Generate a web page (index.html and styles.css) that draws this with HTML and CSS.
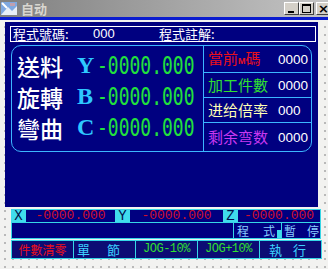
FILE: index.html
```html
<!DOCTYPE html>
<html lang="zh-Hant">
<head>
    <meta charset="UTF-8">
    <title>自动</title>
    <link rel="stylesheet" href="styles.css">
</head>
<body>
<div class="window">
    <div class="titlebar">
        <svg class="app-icon" width="16" height="15" viewBox="0 0 16 15">
            <rect x="0" y="1" width="16" height="13" fill="#7fa8e0"/>
            <path d="M0 14 L7 6 L11 10 L16 5 L16 14 Z" fill="#e8eef8"/>
            <path d="M1 2 L6 7" stroke="#ffffff" stroke-width="2"/>
            <rect x="9" y="2" width="5" height="3" fill="#c0a0b0"/>
        </svg>
        <span class="title">自动</span>
        <div class="caption-btns">
            <span class="cbtn"><span class="glyph-min"></span></span>
            <span class="cbtn"><span class="glyph-max"></span></span>
            <span class="cbtn close">×</span>
        </div>
    </div>
    <div class="menuline"></div>
    <div class="form">
        <div class="screen">
            <div class="info">
                <span class="info-label">程式號碼:</span>
                <span class="info-num">000</span>
                <span class="info-label">程式註解:</span>
            </div>
            <div class="panel">
                <div class="axes">
                    <div class="axis-row">
                        <span class="axis-name">送料</span>
                        <span class="axis-letter">Y</span>
                        <span class="axis-value">-0000.000</span>
                    </div>
                    <div class="axis-row">
                        <span class="axis-name">旋轉</span>
                        <span class="axis-letter">B</span>
                        <span class="axis-value">-0000.000</span>
                    </div>
                    <div class="axis-row">
                        <span class="axis-name">彎曲</span>
                        <span class="axis-letter">C</span>
                        <span class="axis-value">-0000.000</span>
                    </div>
                </div>
                <div class="stats">
                    <div class="stat">
                        <span class="stat-label red">當前<small>M</small>碼</span>
                        <span class="stat-value">0000</span>
                    </div>
                    <div class="stat">
                        <span class="stat-label green">加工件數</span>
                        <span class="stat-value">0000</span>
                    </div>
                    <div class="stat">
                        <span class="stat-label yellow">进给倍率</span>
                        <span class="stat-value">000</span>
                    </div>
                    <div class="stat">
                        <span class="stat-label purple">剩余弯数</span>
                        <span class="stat-value">0000</span>
                    </div>
                </div>
            </div>
        </div>
        <div class="controls">
            <div class="coords">
                <span class="coord-letter">X</span>
                <span class="coord-value cx">-0000.000</span>
                <span class="coord-letter">Y</span>
                <span class="coord-value cy">-0000.000</span>
                <span class="coord-letter">Z</span>
                <span class="coord-value cz">-0000.000</span>
            </div>
            <div class="status">
                <span class="status-blank"></span>
                <span class="status-cell prog">程 式</span>
                <span class="status-mark"></span>
                <span class="status-cell pause">暫 停</span>
            </div>
            <div class="buttons">
                <span class="btn red">件數清零</span>
                <span class="btn cyan spaced single">單 節</span>
                <span class="btn green jog">JOG-10%</span>
                <span class="btn green jog">JOG+10%</span>
                <span class="btn cyan spaced run">執 行</span>
            </div>
        </div>
    </div>
</div>
</body>
</html>
```

FILE: styles.css
```css
body {
    margin: 0;
    background: #d4d0c8;
}
.window {
    width: 328px;
    height: 269px;
    overflow: hidden;
    background: #d4d0c8;
    font-family: "Noto Sans CJK TC", "Noto Sans CJK SC", sans-serif;
}

/* title bar */
.titlebar {
    height: 17px;
    display: flex;
    align-items: center;
    background: linear-gradient(to right, #808080, #c4c4c4);
}
.app-icon {
    margin-left: 1px;
}
.title {
    margin-left: 4px;
    color: #d8d6d0;
    font-size: 13px;
    font-weight: bold;
    line-height: 17px;
}
.caption-btns {
    margin-left: auto;
    display: flex;
    margin-right: -3px;
}
.cbtn {
    width: 15px;
    height: 13px;
    box-sizing: border-box;
    background: #d4d0c8;
    border: 1px solid;
    border-color: #ffffff #404040 #404040 #ffffff;
    display: flex;
    align-items: center;
    justify-content: center;
    font-family: "DejaVu Sans", sans-serif;
    font-size: 13px;
    font-weight: bold;
    line-height: 11px;
    color: #000;
}
.cbtn.close {
    margin-left: 2px;
}
.glyph-min {
    width: 6px;
    height: 2px;
    background: #000;
    margin-top: 6px;
    margin-right: 2px;
}
.glyph-max {
    width: 7px;
    height: 6px;
    border: 1px solid #000;
    border-top-width: 2px;
}
.menuline {
    height: 3px;
    background: #0b1ccf;
}

/* form surface */
.form {
    height: 249px;
    padding-top: 2px;
    box-sizing: border-box;
    background-color: #f2f2f0;
    background-image: radial-gradient(#9a9a9a 0.6px, transparent 0.9px);
    background-size: 8px 8px;
    background-position: 1px 3px;
}
.screen {
    margin-left: 5px;
    width: 313px;
    height: 185px;
    padding: 4px 0 0 5px;
    box-sizing: border-box;
    background: #000080;
}
.info {
    width: 306px;
    height: 16px;
    box-sizing: border-box;
    border: 1px solid #ffffff;
    display: flex;
    align-items: center;
    color: #ffffff;
    font-size: 13px;
    line-height: 14px;
}
.info-label:first-child {
    width: 80px;
    padding-left: 2px;
}
.info-num {
    width: 66px;
    font-family: "Liberation Sans", sans-serif;
}

/* main panel */
.panel {
    margin: 3px 0 0 1px;
    width: 301px;
    height: 107px;
    box-sizing: border-box;
    border: 1px solid #3cb6ff;
    border-radius: 10px;
    display: flex;
}
.axes {
    width: 191px;
    border-right: 1px solid #3cb6ff;
    padding-top: 4px;
}
.axis-row {
    height: 31px;
    display: flex;
    align-items: center;
}
.axis-name {
    width: 60px;
    padding-left: 5px;
    color: #ffffff;
    font-size: 23px;
    font-weight: 500;
    line-height: 28px;
}
.axis-letter {
    width: 20px;
    color: #2ec8ff;
    font-family: "Liberation Serif", serif;
    font-size: 24px;
    font-weight: bold;
}
.axis-value {
    display: inline-block;
    color: #22e03c;
    font-family: "DejaVu Sans Mono", monospace;
    font-size: 18px;
    transform: scale(1, 1.38);
}
.stats {
    flex: 1;
    display: grid;
    grid-template-rows: 26px 25px 25px 1fr;
}
.stat {
    display: flex;
    align-items: center;
    padding-left: 4px;
    border-top: 1px solid #3cb6ff;
}
.stat:first-child {
    border-top: 0;
}
.stat-label {
    width: 70px;
    font-size: 15px;
    line-height: 18px;
}
.stat-label small {
    font-family: "Liberation Sans", sans-serif;
    font-size: 9px;
    font-weight: bold;
}
.stat-value {
    color: #ffffff;
    font-family: "Liberation Sans", sans-serif;
    font-size: 13.5px;
}
.red { color: #e8101c; }
.green { color: #30e030; }
.yellow { color: #ffffb4; }
.purple { color: #c838f0; }
.cyan { color: #3cd2ff; }

/* bottom controls */
.controls {
    margin: 2px 0 0 11px;
    width: 310px;
}
.coords {
    height: 14px;
    display: flex;
    border: 1px solid #36d6e6;
    border-left: 0;
    box-sizing: border-box;
    background: #000080;
    overflow: hidden;
}
.coord-letter {
    width: 15px;
    background: #40dcec;
    color: #00104a;
    font-family: "Liberation Mono", monospace;
    font-size: 14px;
    line-height: 12px;
    text-align: center;
}
.coord-value {
    color: #d0102c;
    font-family: "Liberation Mono", monospace;
    font-size: 13px;
    line-height: 12px;
    text-align: center;
}
.cx { width: 89px; }
.cy { width: 93px; }
.cz { flex: 1; }
.status {
    height: 16px;
    display: flex;
    border: 1px solid #36d6e6;
    border-top: 0;
    box-sizing: border-box;
    background: #000080;
}
.status-blank {
    flex: 1;
}
.status-cell {
    border-left: 1px solid #36d6e6;
    color: #88ccff;
    font-size: 12px;
    line-height: 15px;
    text-align: justify;
    text-align-last: justify;
    box-sizing: border-box;
}
.status-cell.prog {
    width: 44px;
    padding: 0 2px 0 3px;
}
.status-cell.pause {
    width: 39px;
    padding: 0 1px 0 2px;
}
.status-mark {
    width: 4px;
    height: 8px;
    margin-top: auto;
    background: #40dcec;
}
.buttons {
    margin-top: 1px;
    height: 19px;
    display: grid;
    grid-template-columns: repeat(5, 1fr);
    gap: 1px;
    padding: 1px;
    box-sizing: border-box;
    background: #36d6e6;
    width: 311px;
}
.btn {
    background: #0c0c74;
    font-size: 12px;
    line-height: 17px;
    text-align: center;
}
.btn.spaced {
    font-size: 13px;
    text-align: justify;
    text-align-last: justify;
}
.btn.single {
    padding: 0 15px 0 3px;
}
.btn.run {
    padding: 0 15px 0 9px;
}
.btn.jog {
    font-family: "Liberation Mono", monospace;
    font-size: 12px;
    letter-spacing: -0.5px;
}
```
